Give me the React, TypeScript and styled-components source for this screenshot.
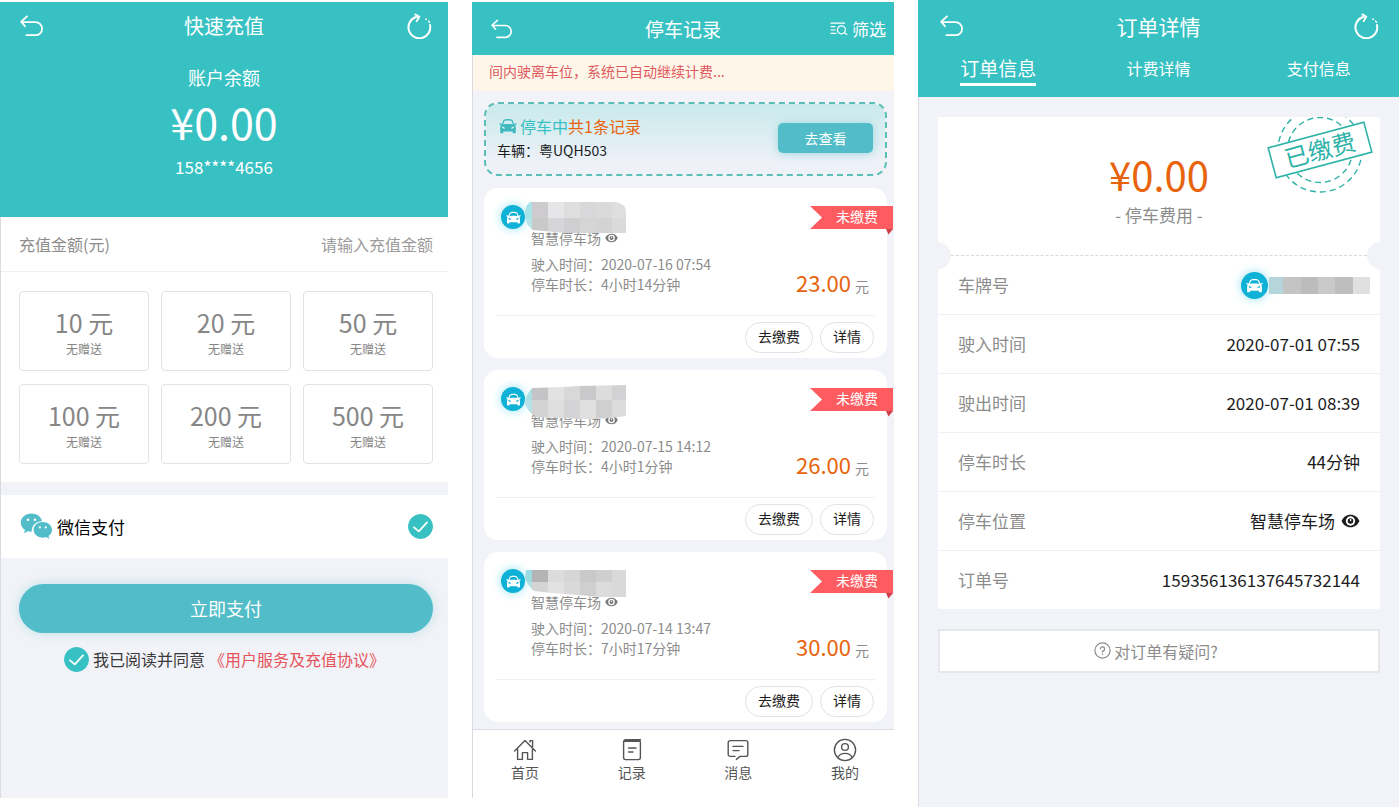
import React, { useState } from "react";
import styled, { createGlobalStyle, css } from "styled-components";

const teal = "#38c1c3";
const tealSoft = "#52bdc8";
const canvas = "#f2f3f8";
const orange = "#e8640c";
const grey = "#8c8c8c";
const line = "#f0f0f2";

const GlobalStyle = createGlobalStyle`
  * { box-sizing: border-box; }
  body {
    margin: 0;
    background: #fff;
    color: #1c1c1c;
    font-family: "Noto Sans CJK SC", "Noto Sans", sans-serif;
  }
  button, input { font: inherit; color: inherit; }
  button { border: 0; padding: 0; background: none; cursor: pointer; }
  h1, p, dl, dd, ul { margin: 0; padding: 0; font-weight: 400; }
  svg { display: block; flex: none; }
`;

/* ---------- shared parts ---------- */

const Board = styled.main`
  display: grid;
  grid-template-columns: 448fr 422fr 481fr;
  gap: 24px;
  min-height: 100vh;
  padding-right: 1px;
`;

const Screen = styled.section<{ $inset?: boolean }>`
  display: flex;
  flex-direction: column;
  min-width: 0;
  margin: ${(p) => (p.$inset ? "2px 0 11px" : "0 0 2px")};
  border-left: 1px solid #dadbe0;
  background: ${canvas};
`;

const Header = styled.header`
  margin-left: -1px;
  background: ${teal};
  color: #fff;
  text-align: center;
`;

const TitleBar = styled.div<{ $height: number; $start: number; $end: number }>`
  display: grid;
  grid-template-columns: 1fr auto 1fr;
  align-items: center;
  height: ${(p) => p.$height}px;

  > :first-child {
    margin-left: ${(p) => p.$start}px;
  }
  > :last-child {
    margin-right: ${(p) => p.$end}px;
  }
`;

const Title = styled.h1<{ $size: number }>`
  font-size: ${(p) => p.$size}px;
  line-height: 28px;
`;

const IconButton = styled.button<{ $end?: boolean }>`
  display: flex;
  align-items: center;
  gap: 4px;
  justify-self: ${(p) => (p.$end ? "end" : "start")};
  font-size: 17px;
  line-height: 24px;
`;

const BackIcon = ({ width = 24 }: { width?: number }) => (
  <svg width={width} height={width - 2} viewBox="0 0 24 22" fill="none" stroke="#fff" strokeWidth="1.8" strokeLinecap="round" strokeLinejoin="round">
    <path d="M7 1.4 1.2 6.6 5 11.2" />
    <path d="M1.6 7.2H15.6a6.4 6.4 0 0 1 0 13H6.4" />
  </svg>
);

const RefreshIcon = () => (
  <svg width="25" height="26" viewBox="0 0 25 26" fill="none" stroke="#fff" strokeLinecap="round">
    <path d="M8.4 4.2A10.9 10.9 0 1 0 23 12" strokeWidth="2" />
    <path d="M8.2 1.4 12.4 3.8 9.6 8.2" strokeWidth="1.8" strokeLinejoin="round" />
    <path d="M8.6 4.2 12 3.9" strokeWidth="1.8" />
    <circle cx="19" cy="6.2" r=".5" strokeWidth="1" />
    <path d="M21.6 8l.8 1.4" strokeWidth="1.4" />
  </svg>
);

const CarShape = ({ size, color }: { size: number; color: string }) => (
  <svg width={size} height={size} viewBox="0 0 24 24" fill={color} fillRule="evenodd">
    <path d="M7.4 3.4C10.4 2.6 13.6 2.6 16.6 3.4 17.6 3.7 18.2 4.3 18.6 5.3L20.1 9.3 22.6 8.4c.9-.2 1.4.8.6 1.4L21.4 11c.7.8 1 1.7 1 2.8V20.4c0 .8-.5 1.2-1.2 1.2H19.4c-.8 0-1.2-.5-1.2-1.2V19.4H5.8V20.4c0 .7-.4 1.2-1.2 1.2H2.8c-.7 0-1.2-.4-1.2-1.2V13.8c0-1.1.3-2 1-2.8L.8 9.8C0 9.2.5 8.2 1.4 8.4L3.9 9.3 5.4 5.3C5.8 4.3 6.4 3.7 7.4 3.4ZM7 5.8 5.6 9.8C9.8 9 14.2 9 18.4 9.8L17 5.8C16.8 5.3 16.5 5.1 16 5 13.4 4.5 10.6 4.5 8 5 7.5 5.1 7.2 5.3 7 5.8ZM3.8 12.8C3.6 14.8 5.2 15.8 8 15.6 7.6 13.8 6 12.8 3.8 12.8ZM20.2 12.8C18 12.8 16.4 13.8 16 15.6 18.8 15.8 20.4 14.8 20.2 12.8Z" />
  </svg>
);

const CarBadge = styled.span<{ $size: number }>`
  display: grid;
  place-items: center;
  flex: none;
  width: ${(p) => p.$size}px;
  height: ${(p) => p.$size}px;
  border-radius: 50%;
  background: #0fb2d6;
  box-shadow: 0 0 9px 1px rgba(15, 190, 220, 0.35);
`;

const EyeIcon = ({ width, color }: { width: number; color: string }) => (
  <svg width={width} height={Math.round(width * 0.75)} viewBox="0 0 20 15" aria-hidden="true">
    <path d="M10 .8C5.400 .8 2.200 3.400.4 7.500 2.200 11.600 5.400 14.200 10 14.200S17.800 11.600 19.600 7.500C17.800 3.400 14.600.8 10 .8Z" fill={color} />
    <circle cx="10" cy="7.500" r="5" fill="#fff" />
    <circle cx="10" cy="7.500" r="3" fill={color} />
    <path d="M9.400 5.400h1.400v2.200H9.400z" fill="#fff" />
  </svg>
);

/* ---------- round tick box ---------- */

const Tick = styled.span`
  display: grid;
  flex: none;
  width: 25px;
  height: 25px;

  input,
  svg {
    grid-area: 1 / 1;
  }
  input {
    appearance: none;
    width: 25px;
    height: 25px;
    margin: 0;
    border: 1px solid ${teal};
    border-radius: 50%;
    background: #fff;
    cursor: pointer;
  }
  input:checked {
    background: ${teal};
  }
  svg {
    z-index: 1;
    pointer-events: none;
  }
`;

const RoundCheck = ({ id }: { id: string }) => {
  const [on, setOn] = useState(true);
  return (
    <Tick>
      <input id={id} type="checkbox" checked={on} onChange={() => setOn(!on)} />
      <svg width="25" height="25" viewBox="0 0 25 25" fill="none" stroke="#fff" strokeWidth="1.8" strokeLinecap="round" strokeLinejoin="round">
        <path d="M6 13.400 10.800 17.400 19 8.400" />
      </svg>
    </Tick>
  );
};

/* ---------- recharge screen ---------- */

const BalanceLabel = styled.p`
  margin-top: 14px;
  font-size: 18px;
  line-height: 26px;
`;

const Balance = styled.p`
  font-size: 43px;
  line-height: 62px;
`;

const Phone = styled.p`
  padding: 2px 0 37px;
  font-size: 17px;
  line-height: 26px;
`;

const AmountRow = styled.div`
  display: flex;
  align-items: center;
  height: 55px;
  padding: 0 15px 0 18px;
  border-bottom: 1px solid ${line};
  background: #fff;
  color: ${grey};
  font-size: 16px;
  line-height: 24px;

  label {
    flex: none;
  }
  input {
    flex: 1;
    min-width: 0;
    padding: 0;
    border: 0;
    outline: 0;
    background: none;
    text-align: right;
  }
  input::placeholder {
    color: #9c9c9c;
    opacity: 1;
  }
`;

const AmountGrid = styled.div`
  display: grid;
  grid-template-columns: repeat(3, 1fr);
  gap: 13px 12px;
  padding: 19px 15px 18px 18px;
  background: #fff;
`;

const AmountButton = styled.button`
  display: flex;
  flex-direction: column;
  align-items: center;
  justify-content: center;
  height: 80px;
  border: 1px solid #e2e2e2;
  border-radius: 4px;
  color: #868686;
  font-size: 25px;
  line-height: 36px;

  small {
    font-size: 12px;
    line-height: 18px;
  }
`;

const PayMethod = styled.label`
  display: flex;
  align-items: center;
  gap: 4px;
  height: 63px;
  margin-top: 13px;
  padding: 0 15px 0 19px;
  background: #fff;
  color: #000;
  font-size: 17px;
  line-height: 24px;

  span:last-child {
    margin-left: auto;
  }
`;

const PayButton = styled.button`
  height: 49px;
  margin: 26px 15px 0 18px;
  padding-bottom: 2px;
  border-radius: 25px;
  background: ${tealSoft};
  box-shadow: 0 0 12px rgba(82, 189, 200, 0.35);
  color: #fff;
  font-size: 18px;
`;

const Agreement = styled.div`
  display: flex;
  align-items: center;
  justify-content: center;
  margin-top: 14px;
  color: #3a3a3a;
  font-size: 16px;
  line-height: 22px;

  label,
  a {
    padding-bottom: 2px;
  }
  label {
    margin: 0 4px 0 4px;
  }
  a {
    color: #e5535b;
    text-decoration: none;
  }
`;

const WechatIcon = () => (
  <svg width="33" height="27" viewBox="0 0 33 27" fill={tealSoft}>
    <path d="M11.400.6C5.400.6.8 4.600.8 9.800c0 3 1.500 5.500 4.200 7.200L4 20.200l3.900-2c1.300.3 2.400.5 3.800.5C11.400 12.800 16 8.200 22 8.200 21 3.600 16.800.6 11.400.6Z" />
    <path d="M32 16.800c0-4.400-4-7.900-9.200-7.900s-9.200 3.500-9.200 7.900 4 7.900 9.200 7.900c1.200 0 2.400-.2 3.400-.6l3.200 1.900-.9-2.900C30.600 21.700 32 19.500 32 16.800Z" />
    <g fill="#fff">
      <circle cx="8" cy="6.800" r="1.300" />
      <circle cx="15" cy="6.800" r="1.300" />
      <circle cx="19.800" cy="14.400" r="1.100" />
      <circle cx="25.800" cy="14.400" r="1.100" />
    </g>
  </svg>
);

const amounts = [10, 20, 50, 100, 200, 500];

const RechargeScreen = () => (
  <Screen $inset>
    <Header>
      <TitleBar $height={48} $start={20} $end={16}>
        <IconButton aria-label="返回"><BackIcon /></IconButton>
        <Title $size={20}>快速充值</Title>
        <IconButton $end aria-label="刷新"><RefreshIcon /></IconButton>
      </TitleBar>
      <BalanceLabel>账户余额</BalanceLabel>
      <Balance>¥0.00</Balance>
      <Phone>158****4656</Phone>
    </Header>
    <AmountRow>
      <label htmlFor="amount">充值金额(元)</label>
      <input id="amount" type="text" inputMode="decimal" placeholder="请输入充值金额" />
    </AmountRow>
    <AmountGrid>
      {amounts.map((n) => (
        <AmountButton key={n}>
          {n} 元<small>无赠送</small>
        </AmountButton>
      ))}
    </AmountGrid>
    <PayMethod htmlFor="wechat">
      <WechatIcon />
      微信支付
      <RoundCheck id="wechat" />
    </PayMethod>
    <PayButton>立即支付</PayButton>
    <Agreement>
      <RoundCheck id="agree" />
      <label htmlFor="agree">我已阅读并同意</label>
      <a href="#agreement">《用户服务及充值协议》</a>
    </Agreement>
  </Screen>
);

/* ---------- records screen ---------- */

const Notice = styled.p`
  height: 36px;
  padding: 0 17px 0 16px;
  background: #fef7e9;
  color: #e0595f;
  font-size: 14px;
  line-height: 32px;
`;

const RecordList = styled.div`
  display: flex;
  flex-direction: column;
  gap: 12px;
  padding: 11px 7px 6px 11px;
`;

const ActiveBox = styled.div`
  display: flex;
  align-items: center;
  justify-content: space-between;
  height: 74px;
  padding: 0 12px 2px 11px;
  border: 2px dashed #5bbfb8;
  border-radius: 14px;
  background: linear-gradient(#c9eaeb, #eef1f8 85%);
  background-clip: padding-box;
`;

const ActiveTitle = styled.p`
  display: flex;
  align-items: center;
  padding-left: 2px;
  color: ${teal};
  font-size: 16px;
  line-height: 24px;

  svg {
    margin-right: 3px;
  }
  em {
    color: ${orange};
    font-style: normal;
  }
`;

const ActivePlate = styled.p`
  font-size: 14px;
  line-height: 24px;
`;

const ViewButton = styled.button`
  width: 95px;
  height: 30px;
  border-radius: 5px;
  background: ${tealSoft};
  box-shadow: 0 1px 8px rgba(82, 189, 200, 0.45);
  color: #fff;
  font-size: 14px;
`;

const Card = styled.article`
  position: relative;
  height: 170px;
  padding: 17px 12px 0;
  border-radius: 14px;
  background: #fff;
`;

const CardBody = styled.div`
  display: flex;
  gap: 6px;
  height: 111px;
  padding: 0 6px 21px 5px;
  border-bottom: 1px solid ${line};
`;

const Info = styled.div`
  flex: 1;
  color: ${grey};
  font-size: 14px;
  line-height: 20px;
`;

const Plate = styled.div`
  position: relative;
  height: 23px;

  svg {
    position: absolute;
    top: -5px;
    left: -7px;
  }
`;

const Place = styled.p`
  display: flex;
  align-items: center;
  gap: 4px;
  margin-bottom: 6px;
`;

const Price = styled.p`
  align-self: flex-end;
  color: ${orange};
  font-size: 22px;
  line-height: 16px;

  small {
    margin-left: 4px;
    color: ${grey};
    font-size: 14px;
  }
`;

const CardActions = styled.div`
  display: flex;
  justify-content: flex-end;
  gap: 7px;
  padding: 6px 1px 0 0;
`;

const PillButton = styled.button`
  height: 31px;
  padding: 0 12px 3px;
  border: 1px solid #e2e2e5;
  border-radius: 16px;
  font-size: 14px;
`;

const Ribbon = styled.div`
  position: absolute;
  top: 17px;
  right: -6px;
  display: grid;
  color: #fff;
  font-size: 14px;
  line-height: 22px;

  svg,
  span {
    grid-area: 1 / 1;
  }
  span {
    position: relative;
    padding-left: 26px;
  }
`;

const TabBar = styled.nav`
  display: flex;
  justify-content: space-between;
  height: 69px;
  margin-top: auto;
  padding: 8px 29px 0 32px;
  border-top: 1px solid #dcdde3;
  background: #fff;
`;

const TabItem = styled.a`
  display: flex;
  flex-direction: column;
  align-items: center;
  width: 40px;
  color: #555;
  font-size: 14px;
  line-height: 20px;
  text-decoration: none;
`;

type Mosaic = { outline: string; top: string[]; bottom: string[] };

const MosaicPatch = ({ id, mosaic }: { id: string; mosaic: Mosaic }) => (
  <svg width="104" height="38" viewBox="0 0 104 38" aria-hidden="true">
    <clipPath id={id}>
      <path d={mosaic.outline} />
    </clipPath>
    <g clipPath={`url(#${id})`}>
      {[mosaic.top, mosaic.bottom].map((row, r) =>
        row.map((fill, c) => (
          <rect key={`${r}-${c}`} x={c === 0 ? 0 : 8 + (c - 1) * 16} y={r * 18} width={c === 0 ? 8 : 16} height={r ? 20 : 18} fill={fill} />
        ))
      )}
    </g>
  </svg>
);

const records: { place: string; start: string; length: string; price: string; mosaic: Mosaic }[] = [
  {
    place: "智慧停车场",
    start: "2020-07-16 07:54",
    length: "4小时14分钟",
    price: "23.00",
    mosaic: {
      outline: "M6 2H92Q102 4 102 12V33H76L40 33 20 31 9 30Q3 26 1 18Q0 6 6 2Z",
      top: ["#a9e3ea", "#cdcbce", "#e6e6e8", "#dededf", "#d8d8da", "#dadada", "#dedede"],
      bottom: ["#b7e4e9", "#c9c9ca", "#d6d6d8", "#cfcfd1", "#d5d5d6", "#d3d3d4", "#dadada"],
    },
  },
  {
    place: "智慧停车场",
    start: "2020-07-15 14:12",
    length: "4小时1分钟",
    price: "26.00",
    mosaic: {
      outline: "M8 6 40 5 54 4 102 3V34Q84 37 62 37L12 35Q4 30 1 22Q1 14 8 6Z",
      top: ["#a9dfe6", "#c4c4c6", "#e2e2e2", "#d8d8d9", "#c9c9cb", "#dcdcdc", "#d2d2d4"],
      bottom: ["#b5e2e8", "#d2d2d3", "#dedede", "#d4d4d6", "#e0e0e0", "#cfcfd0", "#dcdcdc"],
    },
  },
  {
    place: "智慧停车场",
    start: "2020-07-14 13:47",
    length: "7小时17分钟",
    price: "30.00",
    mosaic: {
      outline: "M2 6H102V33L76 33 54 31 28 29 10 27Q4 22 1 14Z",
      top: ["#9bdbe2", "#b4b4b6", "#dcdcdd", "#d6d6d8", "#c9c9ca", "#cfcfd1", "#d9d9da"],
      bottom: ["#b0e0e6", "#d4d4d5", "#e2e2e2", "#d9d9da", "#cfcfd0", "#dcdcdd", "#d9d9d9"],
    },
  },
];

const FilterIcon = () => (
  <svg width="18" height="16" viewBox="0 0 18 16" fill="none" stroke="#fff" strokeWidth="1.200" strokeLinecap="round">
    <path d="M1 2.200H14.500M1 5.600H5M1 9H5M1 12.400H6" />
    <circle cx="11.400" cy="8.800" r="4" />
    <path d="M14.200 11.600 16.800 13.600" />
  </svg>
);

const tabs: { label: string; icon: React.ReactNode }[] = [
  {
    label: "首页",
    icon: <path d="M1.600 13 12 2.400 22.400 13M17 4V2.600H19.600V8.500M4.600 11.200V21.400H9.400V14.600H14.600V21.400H19.400V11.200" />,
  },
  {
    label: "记录",
    icon: <path d="M20.400 1.800H5.600A2 2 0 0 0 3.600 3.800V19.600A2 2 0 0 0 5.600 21.600H18.400A2 2 0 0 0 20.400 19.600V4.400M4.600 3.200H20.400M8.600 10H16M8.600 14H13" />,
  },
  {
    label: "消息",
    icon: <path d="M9 18.400H4.200A2 2 0 0 1 2.200 16.400V4.600A2 2 0 0 1 4.200 2.600H19.800A2 2 0 0 1 21.800 4.600V16.400A2 2 0 0 1 19.800 18.400H14L10.400 21.400M7 8.400H17M7 12.600H13" />,
  },
  {
    label: "我的",
    icon: (
      <>
        <circle cx="12" cy="12" r="10.600" />
        <circle cx="12" cy="9" r="3.400" />
        <path d="M5 19.600C6 16.400 8.600 15.400 12 15.400S18 16.400 19 19.600" />
      </>
    ),
  },
];

const RecordsScreen = () => (
  <Screen $inset>
    <Header>
      <TitleBar $height={53} $start={19} $end={8}>
        <IconButton aria-label="返回"><BackIcon width={22} /></IconButton>
        <Title $size={19}>停车记录</Title>
        <IconButton $end><FilterIcon />筛选</IconButton>
      </TitleBar>
    </Header>
    <Notice>间内驶离车位，系统已自动继续计费...</Notice>
    <RecordList>
      <ActiveBox>
        <div>
          <ActiveTitle>
            <CarShape size={18} color="#3fb9bd" />
            停车中<em>共1条记录</em>
          </ActiveTitle>
          <ActivePlate>车辆：粤UQH503</ActivePlate>
        </div>
        <ViewButton>去查看</ViewButton>
      </ActiveBox>
      {records.map((r, i) => (
        <Card key={r.start}>
          <CardBody>
            <CarBadge $size={24}><CarShape size={15} color="#fff" /></CarBadge>
            <Info>
              <Plate><MosaicPatch id={`plate-${i}`} mosaic={r.mosaic} /></Plate>
              <Place>{r.place}<EyeIcon width={13} color="#777" /></Place>
              <p>驶入时间：{r.start}</p>
              <p>停车时长：{r.length}</p>
            </Info>
            <Price>{r.price}<small>元</small></Price>
          </CardBody>
          <CardActions>
            <PillButton>去缴费</PillButton>
            <PillButton>详情</PillButton>
          </CardActions>
          <Ribbon>
            <svg width="83" height="30" viewBox="0 0 83 30">
              <path d="M0 1H83V24H0L12 12.500Z" fill="#fe5c60" />
              <path d="M76 24H83L78.500 29.500Z" fill="#cf3f49" />
            </svg>
            <span>未缴费</span>
          </Ribbon>
        </Card>
      ))}
    </RecordList>
    <TabBar>
      {tabs.map((t) => (
        <TabItem key={t.label} href="#">
          <svg width="24" height="24" viewBox="0 0 24 24" fill="none" stroke="#555" strokeWidth="1.400" strokeLinecap="round" strokeLinejoin="round">
            {t.icon}
          </svg>
          {t.label}
        </TabItem>
      ))}
    </TabBar>
  </Screen>
);

/* ---------- order screen ---------- */

const OrderTabs = styled.nav`
  display: grid;
  grid-template-columns: repeat(3, 1fr);
  height: 45px;
`;

const OrderTab = styled.button<{ $active?: boolean }>`
  justify-self: center;
  align-self: start;
  margin-top: 4px;
  padding-bottom: 3px;
  border-bottom: 3px solid transparent;
  font-size: 16px;
  line-height: 24px;
  ${(p) =>
    p.$active &&
    css`
      border-bottom-color: #fff;
      font-size: 19px;
    `}
`;

const OrderContent = styled.div`
  padding: 20px 19px;
`;

const Ticket = styled.div`
  position: relative;
  overflow: hidden;
  background: #fff;
`;

const Summary = styled.div`
  position: relative;
  padding: 33px 0 28px;
  text-align: center;

  &::before,
  &::after {
    content: "";
    position: absolute;
    bottom: -14px;
    width: 26px;
    height: 27px;
    border-radius: 50%;
    background: ${canvas};
  }
  &::before {
    left: -13px;
  }
  &::after {
    right: -13px;
  }
`;

const Fee = styled.p`
  color: ${orange};
  font-size: 40px;
  line-height: 48px;
`;

const FeeLabel = styled.p`
  margin-top: 5px;
  color: ${grey};
  font-size: 17px;
  line-height: 24px;
`;

const Stamp = styled.svg`
  position: absolute;
  top: 0;
  right: 0;
`;

const Details = styled.dl`
  &::before {
    content: "";
    display: block;
    margin: 0 13px;
    border-top: 1px dashed #d9d9d9;
  }
`;

const DetailRow = styled.div`
  display: flex;
  align-items: center;
  justify-content: space-between;
  height: 59px;
  padding: 0 20px;
  border-bottom: 1px solid ${line};
  font-size: 17px;
  line-height: 24px;

  &:last-child {
    height: 58px;
    border-bottom: 0;
  }
  dt {
    color: ${grey};
  }
  dd {
    display: flex;
    align-items: center;
    gap: 6px;
  }
`;

const HiddenPlate = styled.span`
  display: flex;
  align-items: center;
  gap: 1px;
  margin-right: -10px;
`;

const HelpButton = styled.button`
  display: flex;
  align-items: center;
  justify-content: center;
  gap: 3px;
  width: 100%;
  height: 44px;
  margin-top: 20px;
  padding: 0 6px 1px 0;
  border: 2px solid #e6e7eb;
  background: #fff;
  color: ${grey};
  font-size: 16px;
`;

const OrderScreen = () => (
  <Screen>
    <Header>
      <TitleBar $height={52} $start={22} $end={20}>
        <IconButton aria-label="返回"><BackIcon /></IconButton>
        <Title $size={21}>订单详情</Title>
        <IconButton $end aria-label="刷新"><RefreshIcon /></IconButton>
      </TitleBar>
      <OrderTabs>
        <OrderTab $active>订单信息</OrderTab>
        <OrderTab>计费详情</OrderTab>
        <OrderTab>支付信息</OrderTab>
      </OrderTabs>
    </Header>
    <OrderContent>
      <Ticket>
        <Summary>
          <Fee>¥0.00</Fee>
          <FeeLabel>- 停车费用 -</FeeLabel>
          <Stamp width="120" height="84" viewBox="0 0 120 84">
            <g fill="none" stroke="#2fb3a8" strokeWidth="1.400" strokeDasharray="6 4">
              <circle cx="60" cy="33" r="42" />
              <circle cx="60" cy="33" r="32.500" />
            </g>
            <g transform="rotate(-15 60 33)">
              <rect x="10.500" y="17.500" width="99" height="31" fill="#fff" stroke="#2fb3a8" strokeWidth="1.600" />
              <text x="60" y="42" textAnchor="middle" fontSize="24" fill="#2fb3a8">已缴费</text>
            </g>
          </Stamp>
        </Summary>
        <Details>
          <DetailRow>
            <dt>车牌号</dt>
            <dd>
              <HiddenPlate>
                <CarBadge $size={27}><CarShape size={17} color="#fff" /></CarBadge>
                <svg width="101" height="17" viewBox="0 0 101 17" aria-hidden="true">
                  <rect width="14" height="17" fill="#b4d6db" />
                  <rect x="14" width="18" height="17" fill="#c4c4c4" />
                  <rect x="32" width="17" height="17" fill="#bcbcbc" />
                  <rect x="49" width="17" height="17" fill="#c9c9c9" />
                  <rect x="66" width="18" height="17" fill="#bebebe" />
                  <rect x="84" width="17" height="17" fill="#e0e0e0" />
                </svg>
              </HiddenPlate>
            </dd>
          </DetailRow>
          <DetailRow><dt>驶入时间</dt><dd>2020-07-01 07:55</dd></DetailRow>
          <DetailRow><dt>驶出时间</dt><dd>2020-07-01 08:39</dd></DetailRow>
          <DetailRow><dt>停车时长</dt><dd>44分钟</dd></DetailRow>
          <DetailRow><dt>停车位置</dt><dd>智慧停车场<EyeIcon width={19} color="#1c1c1c" /></dd></DetailRow>
          <DetailRow><dt>订单号</dt><dd>159356136137645732144</dd></DetailRow>
        </Details>
      </Ticket>
      <HelpButton>
        <svg width="17" height="17" viewBox="0 0 17 17" fill="none" stroke={grey} strokeWidth="1.200" strokeLinecap="round">
          <circle cx="8.500" cy="8.500" r="7.600" />
          <path d="M6.400 6.800A2.100 2.100 0 1 1 8.500 9V10.200" />
          <path d="M8.500 12.200V12.400" />
        </svg>
        对订单有疑问?
      </HelpButton>
    </OrderContent>
  </Screen>
);

export default function App() {
  return (
    <>
      <GlobalStyle />
      <Board>
        <RechargeScreen />
        <RecordsScreen />
        <OrderScreen />
      </Board>
    </>
  );
}
